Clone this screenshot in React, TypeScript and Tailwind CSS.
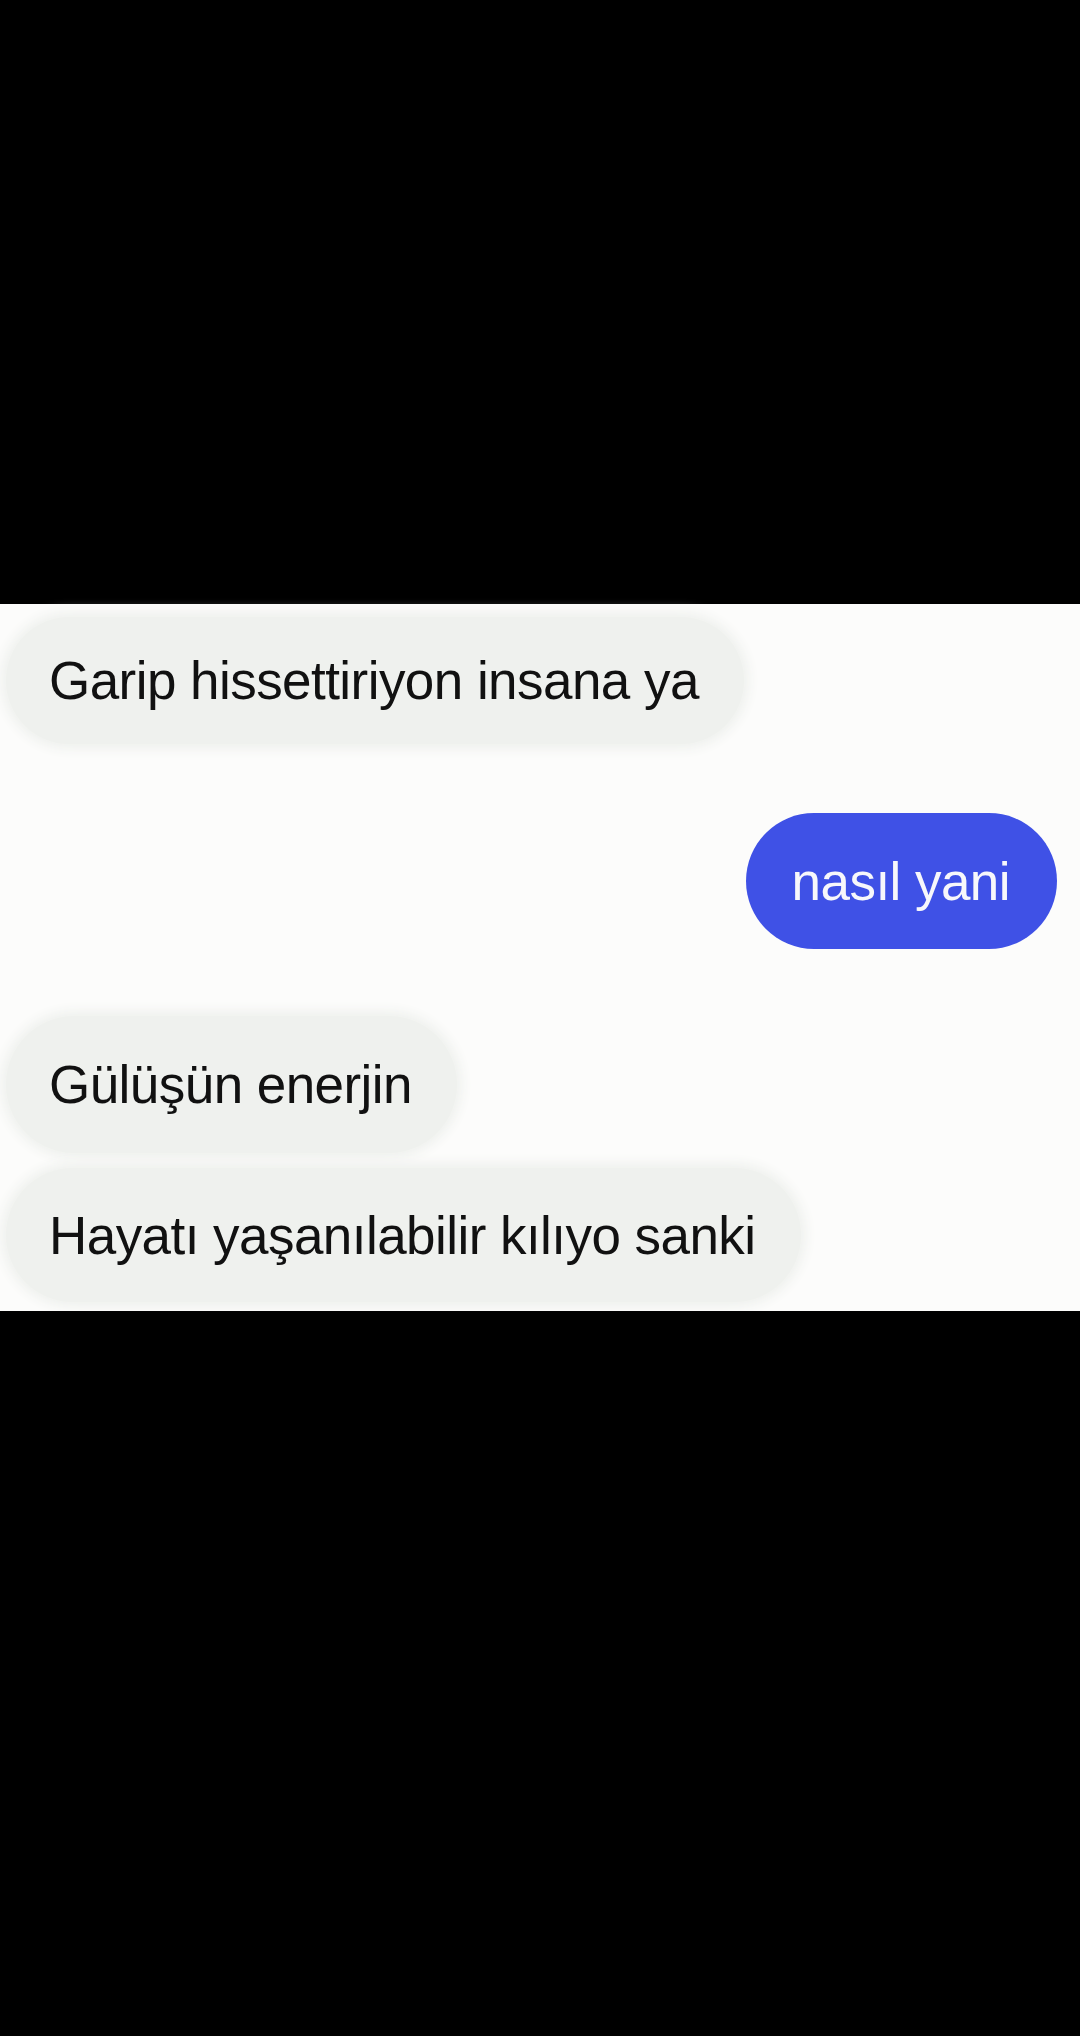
import React from 'react';

const font = { fontFamily: '"Liberation Sans", Arial, sans-serif' };

const Incoming: React.FC<{ text: string; className?: string }> = ({ text, className }) => (
  <div
    className={`self-start ml-[6px] flex items-center rounded-full bg-[#eff1ee] pl-[43px] pr-[45px] text-[53px] leading-none tracking-[-0.55px] text-[#111111] shadow-[0_0_12px_5px_#eff1ee] ${className ?? ''}`}
  >
    {text}
  </div>
);

export default function App() {
  return (
    <div className="flex min-h-[2036px] w-[1080px] flex-col bg-black" style={font}>
      {/* top black band */}
      <div className="h-[604px] shrink-0 bg-black" />

      {/* chat */}
      <div className="flex h-[707px] shrink-0 flex-col bg-[#fcfcfb] pt-[13px]">
        <Incoming text="Garip hissettiriyon insana ya" className="h-[127px]" />

        <div className="mt-[69px] mr-[23px] flex h-[136px] items-center self-end rounded-full bg-[#3f51e6] pl-[46px] pr-[47px] text-[53px] leading-none tracking-[-0.55px] text-[#f7f7fb]">
          nasıl yani
        </div>

        <Incoming text="Gülüşün enerjin" className="mt-[67px] h-[137px]" />
        <Incoming text="Hayatı yaşanılabilir kılıyo sanki" className="mt-[15px] h-[134px]" />
      </div>

      {/* bottom black band */}
      <div className="flex-1 bg-black" />
    </div>
  );
}
